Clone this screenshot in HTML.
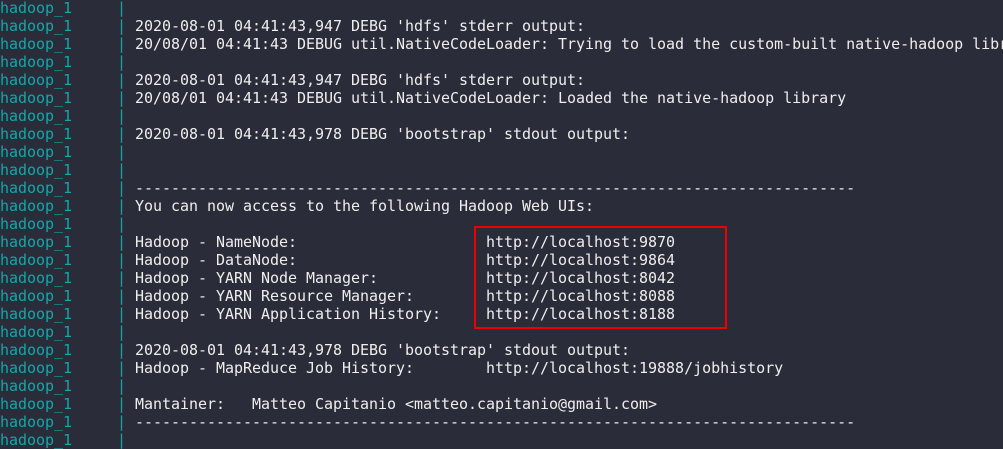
<!DOCTYPE html><html><head><style>
html,body{margin:0;padding:0;width:1003px;height:446px;overflow:hidden;background:#2a2c39;}
pre{margin:0;position:absolute;top:-1px;left:0;font-family:"DejaVu Sans Mono","Liberation Mono",monospace;font-size:15px;line-height:18px;color:#eeeeec;white-space:pre;letter-spacing:-0.03px;}
.p{color:#11a8aa;}
.box{position:absolute;left:474px;top:226px;width:249px;height:99px;border:2px solid #ee0000;}
</style></head><body>
<pre><span class="p">hadoop_1     |</span>
<span class="p">hadoop_1     |</span> 2020-08-01 04:41:43,947 DEBG 'hdfs' stderr output:
<span class="p">hadoop_1     |</span> 20/08/01 04:41:43 DEBUG util.NativeCodeLoader: Trying to load the custom-built native-hadoop library...
<span class="p">hadoop_1     |</span>
<span class="p">hadoop_1     |</span> 2020-08-01 04:41:43,947 DEBG 'hdfs' stderr output:
<span class="p">hadoop_1     |</span> 20/08/01 04:41:43 DEBUG util.NativeCodeLoader: Loaded the native-hadoop library
<span class="p">hadoop_1     |</span>
<span class="p">hadoop_1     |</span> 2020-08-01 04:41:43,978 DEBG 'bootstrap' stdout output:
<span class="p">hadoop_1     |</span>
<span class="p">hadoop_1     |</span>
<span class="p">hadoop_1     |</span> --------------------------------------------------------------------------------
<span class="p">hadoop_1     |</span> You can now access to the following Hadoop Web UIs:
<span class="p">hadoop_1     |</span>
<span class="p">hadoop_1     |</span> Hadoop - NameNode:                     http://localhost:9870
<span class="p">hadoop_1     |</span> Hadoop - DataNode:                     http://localhost:9864
<span class="p">hadoop_1     |</span> Hadoop - YARN Node Manager:            http://localhost:8042
<span class="p">hadoop_1     |</span> Hadoop - YARN Resource Manager:        http://localhost:8088
<span class="p">hadoop_1     |</span> Hadoop - YARN Application History:     http://localhost:8188
<span class="p">hadoop_1     |</span>
<span class="p">hadoop_1     |</span> 2020-08-01 04:41:43,978 DEBG 'bootstrap' stdout output:
<span class="p">hadoop_1     |</span> Hadoop - MapReduce Job History:        http://localhost:19888/jobhistory
<span class="p">hadoop_1     |</span>
<span class="p">hadoop_1     |</span> Mantainer:   Matteo Capitanio &lt;matteo.capitanio@gmail.com&gt;
<span class="p">hadoop_1     |</span> --------------------------------------------------------------------------------
<span class="p">hadoop_1     |</span></pre>
<div class="box"></div>
</body></html>
